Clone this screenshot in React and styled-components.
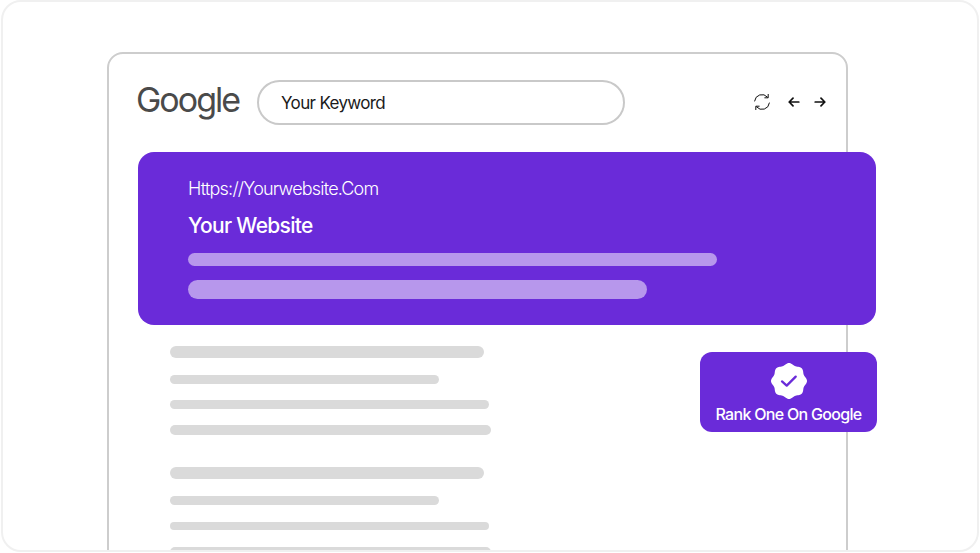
import React from "react";
import styled, { createGlobalStyle } from "styled-components";

const Global = createGlobalStyle`
  html, body { margin: 0; padding: 0; background: #fff; }
  #root { width: 980px; height: 553px; overflow: hidden; }
  * { box-sizing: border-box; }
`;

const Stage = styled.div`
  width: 978px;
  height: 552px;
  margin: 0 0 0 1px;
  border: 2px solid #f0f0f0;
  border-radius: 20px;
  background: #fff;
  overflow: hidden;
  padding: 50px 130px 0 104px;
  font-family: Inter, "Liberation Sans", sans-serif;
`;

const BrowserFrame = styled.div`
  position: relative;
  width: 741px;
  height: 520px;
  border: 2px solid #cdcdcd;
  border-radius: 16px;
  padding: 25px 0 0 29px;
`;

const Toolbar = styled.div`
  display: flex;
  align-items: center;
  height: 46px;
`;

const Logo = styled.div`
  width: 121px;
  margin: 0 0 4px -2px;
  font-family: Inter, sans-serif;
  font-size: 34px;
  line-height: 46px;
  font-weight: 400;
  letter-spacing: -2px;
  color: #4a4a4a;
`;

const SearchBox = styled.div`
  width: 368px;
  height: 45px;
  border: 2px solid #c9c9c9;
  border-radius: 23px;
  display: flex;
  align-items: center;
  padding: 2px 0 0 22px;
  font-size: 17px;
  font-weight: 400;
  letter-spacing: -0.65px;
  color: #1b1b1b;
`;

const Controls = styled.div`
  display: flex;
  align-items: center;
  margin-left: 128px;
`;

const Icon = styled.svg`
  display: block;
  fill: none;
  stroke: #111;
  stroke-linecap: round;
  stroke-linejoin: round;
  margin-left: ${(p) => p.$ml || 0}px;
`;

const ResultCard = styled.section`
  width: 738px;
  height: 173px;
  margin-top: 27px;
  background: #6a2bd9;
  border-radius: 16px;
  padding: 26px 0 0 50px;
  color: #fff;
`;

const Url = styled.div`
  font-size: 18px;
  line-height: 22px;
  font-weight: 300;
  letter-spacing: -0.8px;
`;

const Title = styled.div`
  margin-top: 13px;
  font-size: 21px;
  line-height: 26px;
  font-weight: 500;
  letter-spacing: -0.7px;
`;

const LightBar = styled.div`
  width: ${(p) => p.$w}px;
  height: ${(p) => p.$h}px;
  margin-top: ${(p) => p.$mt}px;
  border-radius: ${(p) => p.$h / 2}px;
  background: #b797ec;
`;

const Lines = styled.div`
  padding: 21px 0 0 32px;
`;

const GreyBar = styled.div`
  width: ${(p) => p.$w}px;
  height: ${(p) => p.$h}px;
  margin-top: ${(p) => p.$mt}px;
  border-radius: ${(p) => p.$h / 2}px;
  background: #dadada;
`;

const Badge = styled.div`
  position: absolute;
  left: 591px;
  top: 298px;
  width: 177px;
  height: 80px;
  border-radius: 12px;
  background: #6a2bd9;
  color: #fff;
  display: flex;
  flex-direction: column;
  align-items: center;
  padding-top: 11px;
`;

const BadgeLabel = styled.div`
  margin-top: 5px;
  font-size: 16px;
  line-height: 20px;
  font-weight: 500;
  letter-spacing: -0.7px;
  white-space: nowrap;
`;

const Seal = () => {
  const pts = [];
  for (let i = 0; i < 360; i += 3) {
    const a = (i * Math.PI) / 180;
    const r = 17 + 1 * Math.cos(8 * a);
    pts.push(`${(18 + r * Math.cos(a)).toFixed(2)},${(18 + r * Math.sin(a)).toFixed(2)}`);
  }
  return (
    <svg width="36" height="36" viewBox="0 0 36 36" style={{ display: "block" }}>
      <polygon points={pts.join(" ")} fill="#fff" />
      <path d="M11 18.4l4.7 4.2 9-9" fill="none" stroke="#6a2bd9" strokeWidth="2.3" strokeLinecap="round" strokeLinejoin="round" />
    </svg>
  );
};

export default function App() {
  return (
    <>
      <Global />
      <Stage>
        <BrowserFrame>
          <Toolbar>
            <Logo>Google</Logo>
            <SearchBox>Your Keyword</SearchBox>
            <Controls>
              <Icon width="18" height="18" viewBox="0 0 18 18" strokeWidth="1">
                <path d="M1.6 8A7.4 7.4 0 0 1 14.4 4" />
                <path d="M15.2 1.4v3.4h-3.4" />
                <path d="M16.4 10A7.4 7.4 0 0 1 3.6 14" />
                <path d="M2.8 16.6v-3.4h3.4" />
              </Icon>
              <Icon $ml={17} width="12" height="12" viewBox="0 0 12 12" strokeWidth="1.7">
                <path d="M10.8 6H1.2M5 2.2 1.2 6 5 9.8" />
              </Icon>
              <Icon $ml={14} width="12" height="12" viewBox="0 0 12 12" strokeWidth="1.7">
                <path d="M1.2 6h9.6M7 2.2 10.8 6 7 9.8" />
              </Icon>
            </Controls>
          </Toolbar>
          <ResultCard>
            <Url>Https://Yourwebsite.Com</Url>
            <Title>Your Website</Title>
            <LightBar $w={529} $h={13} $mt={14} />
            <LightBar $w={459} $h={19} $mt={14} />
          </ResultCard>
          <Lines>
            <GreyBar $w={314} $h={12} $mt={0} />
            <GreyBar $w={269} $h={9} $mt={17} />
            <GreyBar $w={319} $h={9} $mt={16} />
            <GreyBar $w={321} $h={10} $mt={16} />
            <GreyBar $w={314} $h={12} $mt={32} />
            <GreyBar $w={269} $h={9} $mt={17} />
            <GreyBar $w={319} $h={8} $mt={17} />
            <GreyBar $w={321} $h={10} $mt={17} />
          </Lines>
          <Badge>
            <Seal />
            <BadgeLabel>Rank One On Google</BadgeLabel>
          </Badge>
        </BrowserFrame>
      </Stage>
    </>
  );
}
